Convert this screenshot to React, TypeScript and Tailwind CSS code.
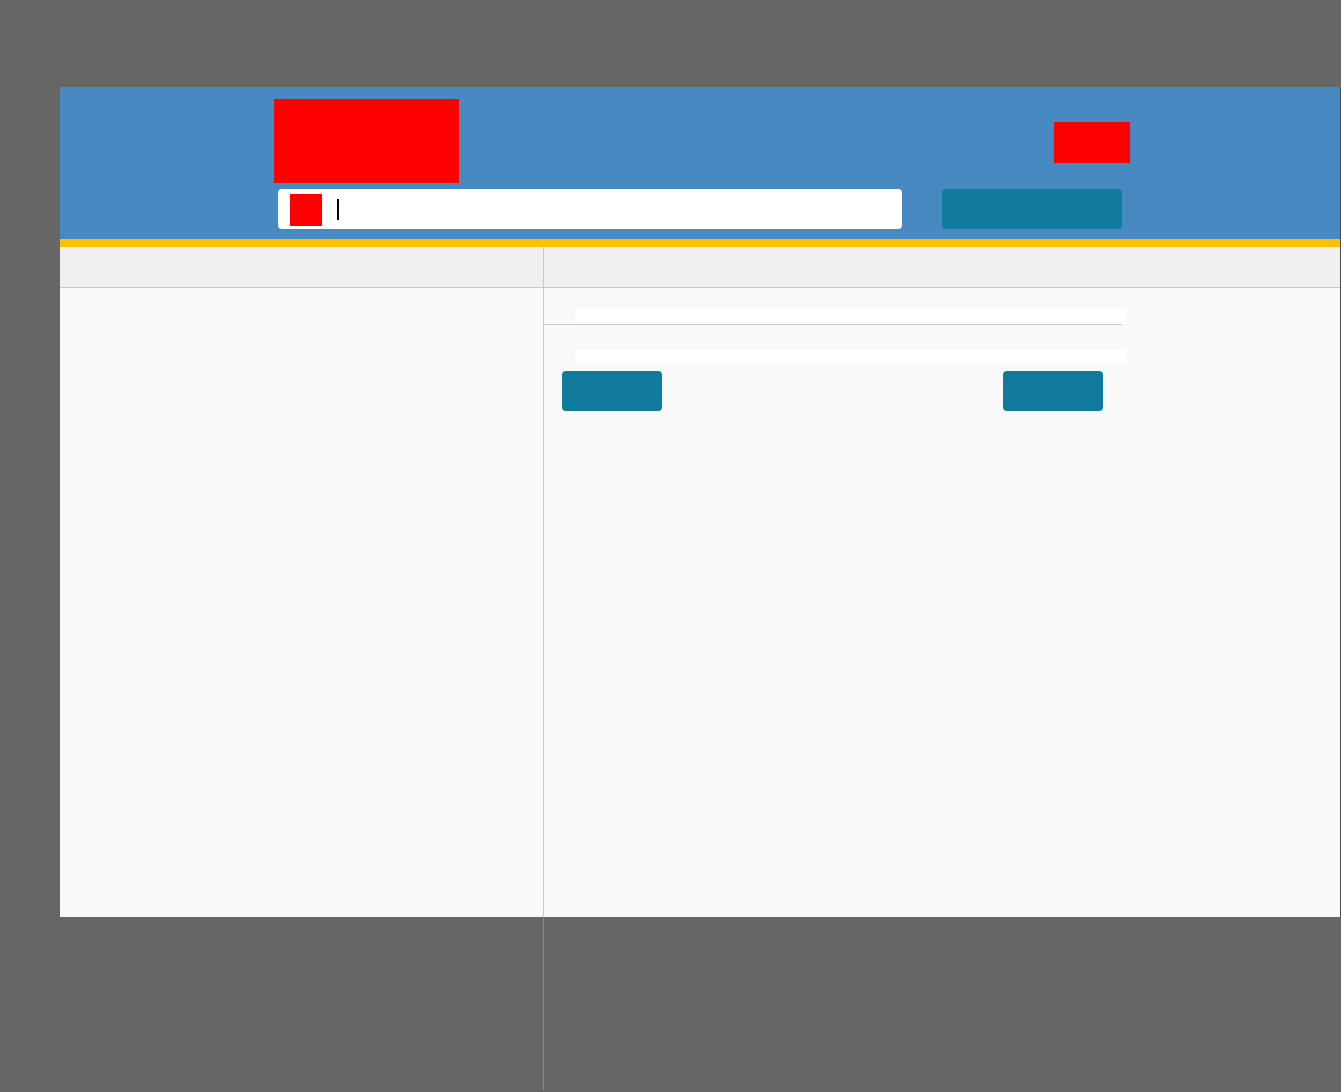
import React from 'react';

function Header() {
  return (
    <header className="h-[152px] bg-[#478ac2] pt-3">
      <div className="ml-[214px] w-[856px]">
        <div className="flex items-start justify-between">
          <div className="h-[84px] w-[185px] bg-[#ff0000]" />
          <div className="mt-[23px] h-[41px] w-[76px] bg-[#ff0000]" />
        </div>
        <div className="mt-[6px] flex items-center">
          <div className="ml-1 flex h-10 w-[624px] items-start rounded bg-white pl-3 pt-[5px]">
            <div className="h-8 w-8 bg-[#ff0000]" />
            <div className="ml-[15px] mt-[5px] h-[21px] w-[2px] bg-black" />
          </div>
          <button className="ml-10 h-10 w-[180px] rounded bg-[#107b9c]" />
        </div>
      </div>
    </header>
  );
}

function Field() {
  return <div className="ml-[31px] h-[13px] w-[552px] bg-white" />;
}

export default function App() {
  return (
    <div className="min-h-[1092px] bg-[#666666] pt-[87px] font-['Liberation_Sans',sans-serif]">
      <div className="ml-[60px] w-[1281px] border-r border-[#4a4a4a]">
        <Header />
        <div className="h-2 bg-[#ffc000]" />
        <div className="flex h-[670px] bg-[#f9f9f9]">
          {/* left column, its rule runs on past the panel */}
          <div className="w-[484px] shrink-0">
            <div className="h-[670px] border-r border-[#c8c8c8]">
              <div className="h-[41px] border-b border-[#c8c8c8] bg-[#f0f0f0]" />
            </div>
            <div className="h-[173px] border-r border-[#8a8a8a]" />
          </div>
          <div className="flex-1">
            <div className="h-[41px] border-b border-[#c8c8c8] bg-[#f0f0f0]" />
            <div className="w-[578px] pt-5">
              <Field />
              <div className="mt-[3px] border-b border-[#c8c8c8]" />
              <div className="mt-[25px]">
                <Field />
              </div>
              <div className="mt-2 flex justify-between pl-[18px] pr-[19px]">
                <button className="h-10 w-[100px] rounded bg-[#107b9c]" />
                <button className="h-10 w-[100px] rounded bg-[#107b9c]" />
              </div>
            </div>
          </div>
        </div>
      </div>
    </div>
  );
}
